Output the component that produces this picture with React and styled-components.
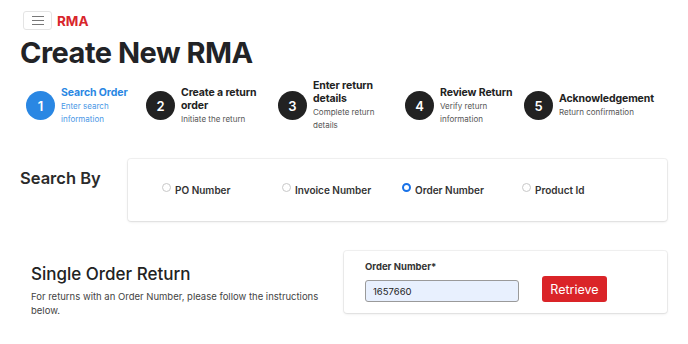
import * as React from "react";
import styled, { createGlobalStyle } from "styled-components";

const GlobalStyle = createGlobalStyle`
  body {
    margin: 0;
    background: #ffffff;
    font-family: Inter, "Noto Sans", sans-serif;
    color: #222;
  }
`;

const Page = styled.div`
  width: 688px;
  height: 344px;
  padding: 11px 0 0 20px;
  box-sizing: border-box;
  overflow: hidden;
`;

const Header = styled.header`
  display: flex;
  align-items: center;
  gap: 5px;
  padding-left: 3px;
`;

const MenuButton = styled.button`
  width: 29px;
  height: 19px;
  padding: 0;
  border: 1px solid #e4e4e4;
  border-radius: 3px;
  background: #fff;
  display: flex;
  align-items: center;
  justify-content: center;
`;

const Brand = styled.span`
  font-size: 13.5px;
  font-weight: 700;
  color: #d8262c;
`;

const Title = styled.h1`
  margin: 4px 0 0;
  font-size: 29px;
  line-height: 38px;
  font-weight: 700;
  color: #222326;
  letter-spacing: -0.5px;
`;

const Steps = styled.ol`
  list-style: none;
  margin: 7px 0 0;
  padding: 0 0 0 6px;
  display: flex;
  align-items: center;
  gap: 10px;
`;

const Step = styled.li`
  display: flex;
  align-items: center;
  gap: 6px;
`;

const Circle = styled.span`
  flex: none;
  width: 29px;
  height: 29px;
  border-radius: 50%;
  background: ${(p) => (p.$active ? "#2a87e3" : "#222222")};
  color: #fff;
  font-size: 13px;
  font-weight: 600;
  display: flex;
  align-items: center;
  justify-content: center;
`;

const StepText = styled.div`
  width: ${(p) => p.$w}px;
`;

const StepTitle = styled.div`
  font-size: 10.5px;
  line-height: 13px;
  font-weight: 700;
  letter-spacing: -0.1px;
  color: ${(p) => (p.$active ? "#2a87e3" : "#222")};
`;

const StepSub = styled.div`
  margin-top: 1px;
  font-size: 8px;
  line-height: 13px;
  color: ${(p) => (p.$active ? "#4a98e6" : "#555")};
`;

const SearchRow = styled.section`
  display: flex;
  margin-top: 27px;
`;

const SectionLabel = styled.h2`
  width: 108px;
  margin: 8px 0 0;
  font-size: 16.5px;
  line-height: 22px;
  font-weight: 600;
  color: #2b2b2b;
`;

const Card = styled.div`
  box-sizing: border-box;
  width: ${(p) => p.$w}px;
  background: #fff;
  border-radius: 3px;
  box-shadow: 0 0 0 1px rgba(0, 0, 0, 0.05), 0 1px 3px rgba(0, 0, 0, 0.1);
`;

const RadioGroup = styled(Card)`
  height: 62px;
  display: flex;
  align-items: center;
  padding-left: 34px;
`;

const RadioOption = styled.label`
  width: 120px;
  display: flex;
  align-items: center;
  gap: 4px;
  font-size: 10px;
  font-weight: 600;
  color: #333;
`;

const RadioDot = styled.span`
  flex: none;
  width: 9px;
  height: 9px;
  box-sizing: border-box;
  border-radius: 50%;
  margin-top: -5px;
  border: ${(p) => (p.$checked ? "2.5px solid #1a73e8" : "1px solid #c8c8c8")};
  background: #fff;
`;

const OrderRow = styled.section`
  display: flex;
  margin-top: 30px;
  padding-left: 11px;
`;

const Intro = styled.div`
  width: 313px;
  padding-top: 12px;
`;

const IntroTitle = styled.h3`
  margin: 0;
  font-size: 17px;
  line-height: 22px;
  font-weight: 500;
  color: #222;
`;

const IntroText = styled.p`
  margin: 5px 0 0;
  font-size: 9.5px;
  line-height: 14px;
  color: #444;
  width: 300px;
`;

const OrderCard = styled(Card)`
  height: 62px;
  padding: 10px 0 11px 21px;
  display: flex;
  align-items: flex-end;
  gap: 23px;
`;

const Field = styled.div`
  display: flex;
  flex-direction: column;
`;

const FieldLabel = styled.label`
  font-size: 9.5px;
  line-height: 12px;
  font-weight: 700;
  color: #333;
  margin-bottom: 7px;
`;

const Input = styled.input`
  box-sizing: border-box;
  width: 154px;
  height: 22px;
  border: 1px solid #9a9a9a;
  border-radius: 3px;
  background: #e8f0fe;
  padding: 0 0 0 7px;
  font-family: Inter, sans-serif;
  font-size: 9.5px;
  color: #222;
  outline: none;
`;

const RetrieveButton = styled.button`
  width: 65px;
  height: 26px;
  border: none;
  border-radius: 3px;
  background: #da2428;
  color: #fff;
  font-family: Inter, sans-serif;
  font-size: 12.5px;
  cursor: pointer;
`;

const steps = [
  { title: "Search Order", sub: "Enter search information", w: 75, active: true },
  { title: "Create a return order", sub: "Initiate the return", w: 87 },
  { title: "Enter return details", sub: "Complete return details", w: 82 },
  { title: "Review Return", sub: "Verify return information", w: 74 },
  { title: "Acknowledgement", sub: "Return confirmation", w: 100 },
];

const options = ["PO Number", "Invoice Number", "Order Number", "Product Id"];

function MenuIcon() {
  return (
    <svg width="12" height="9" viewBox="0 0 12 9">
      <path d="M0 0.5h12M0 4.5h12M0 8.5h12" stroke="#777" strokeWidth="1" />
    </svg>
  );
}

export default function App() {
  const [searchBy, setSearchBy] = React.useState("Order Number");
  const [orderNumber, setOrderNumber] = React.useState("1657660");

  return (
    <>
      <GlobalStyle />
      <Page>
        <Header>
          <MenuButton aria-label="Menu">
            <MenuIcon />
          </MenuButton>
          <Brand>RMA</Brand>
        </Header>

        <Title>Create New RMA</Title>

        <Steps>
          {steps.map((s, i) => (
            <Step key={s.title}>
              <Circle $active={s.active}>{i + 1}</Circle>
              <StepText $w={s.w}>
                <StepTitle $active={s.active}>{s.title}</StepTitle>
                <StepSub $active={s.active}>{s.sub}</StepSub>
              </StepText>
            </Step>
          ))}
        </Steps>

        <SearchRow>
          <SectionLabel>Search By</SectionLabel>
          <RadioGroup $w={539}>
            {options.map((o) => (
              <RadioOption key={o} onClick={() => setSearchBy(o)}>
                <RadioDot $checked={searchBy === o} />
                {o}
              </RadioOption>
            ))}
          </RadioGroup>
        </SearchRow>

        <OrderRow>
          <Intro>
            <IntroTitle>Single Order Return</IntroTitle>
            <IntroText>
              For returns with an Order Number, please follow the instructions
              below.
            </IntroText>
          </Intro>
          <OrderCard $w={323}>
            <Field>
              <FieldLabel>Order Number*</FieldLabel>
              <Input
                value={orderNumber}
                onChange={(e) => setOrderNumber(e.target.value)}
              />
            </Field>
            <RetrieveButton>Retrieve</RetrieveButton>
          </OrderCard>
        </OrderRow>
      </Page>
    </>
  );
}
